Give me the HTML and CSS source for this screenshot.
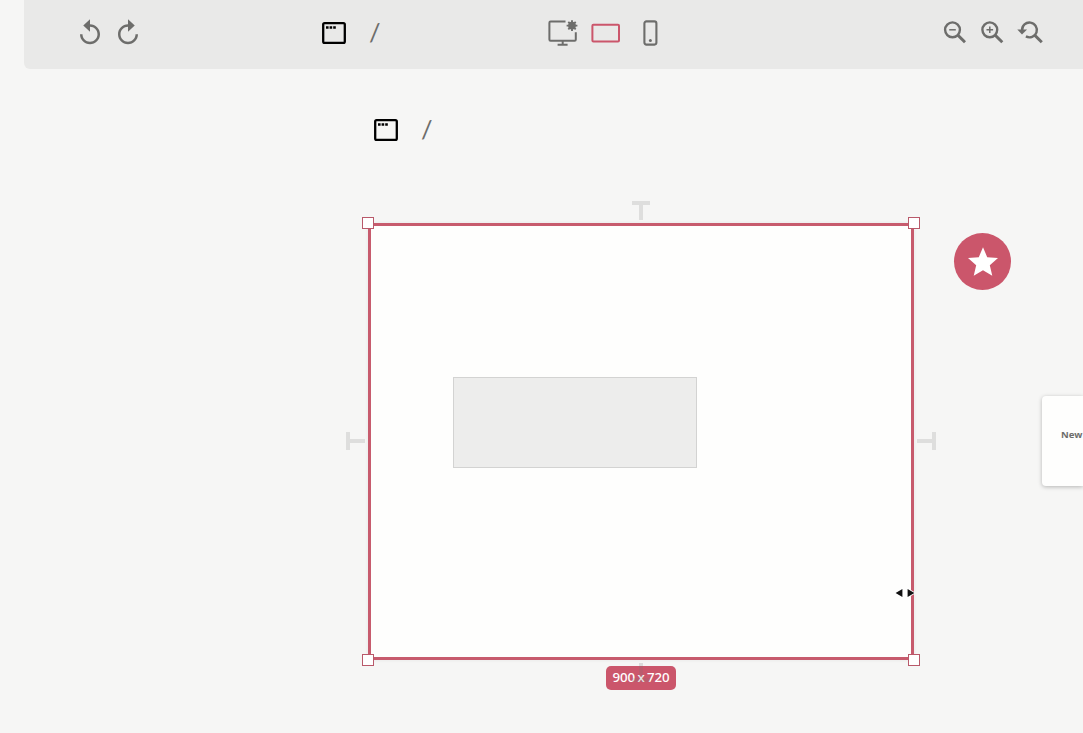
FILE: index.html
```html
<!DOCTYPE html>
<html lang="en">
<head>
<meta charset="utf-8">
<title>Page editor</title>
<link rel="stylesheet" href="styles.css">
</head>
<body>
<svg class="defs" width="0" height="0">
  <symbol id="window" viewBox="0 0 24 22"><rect x="1.2" y="1.2" width="21.6" height="19.6" rx="1.4" fill="none" stroke="currentColor" stroke-width="2.3"/><path d="M4 4.3h2.6v2.4H4zM7.6 4.3h2.6v2.4H7.6zM11.2 4.3h2.6v2.4h-2.6z" fill="currentColor"/></symbol>
  <symbol id="turn" viewBox="0 0 24 24"><path fill="currentColor" d="M12 5V1L6.6 6l5.4 5V7c3.31 0 6 2.69 6 6s-2.69 6-6 6-6-2.69-6-6H4c0 4.42 3.58 8 8 8s8-3.58 8-8-3.58-8-8-8z"/></symbol>
</svg>
<header class="toolbar">
  <div class="history">
    <svg class="turn"><use href="#turn"/></svg>
    <svg class="turn flip"><use href="#turn"/></svg>
  </div>
  <div class="crumb">
    <svg class="window"><use href="#window"/></svg><span class="slash">/</span>
  </div>
  <div class="devices">
    <svg width="30" height="28" viewBox="0 0 30 28" fill="none" stroke="currentColor" stroke-width="2">
      <path d="M17.5 2.6H2.6Q1.4 2.6 1.4 3.8V20.6Q1.4 21.8 2.6 21.8H26.6Q27.8 21.8 27.8 20.6V13.2M14.7 22v3.6M9.6 25.8h10"/>
      <g transform="translate(24 6.6)"><circle r="3.9" fill="currentColor" stroke="none"/><path stroke-width="1.9" d="M0-5.4V5.4M-5.4 0H5.4M-3.7-3.7L3.7 3.7M-3.7 3.7L3.7-3.7"/></g>
    </svg>
    <svg class="active" width="30" height="28" viewBox="0 0 30 28"><rect x="1.4" y="5.8" width="26.6" height="16.6" rx="1" fill="none" stroke="currentColor" stroke-width="2"/></svg>
    <svg width="16" height="28" viewBox="0 0 16 28"><rect x="2.4" y="2.4" width="12" height="23.2" rx="2" fill="none" stroke="currentColor" stroke-width="2.1"/><circle cx="8.4" cy="21.4" r="1.5" fill="currentColor"/></svg>
  </div>
  <div class="zooms">
    <svg width="26" height="26" viewBox="0 0 26 26" fill="none" stroke="currentColor"><g stroke-width="2.4"><circle cx="10.5" cy="10.8" r="7.4"/><path stroke-width="2.9" d="M15.6 15.9l7.4 7.4"/></g><path stroke-width="1.5" d="M7.2 10.8h6.6"/></svg>
    <svg width="26" height="26" viewBox="0 0 26 26" fill="none" stroke="currentColor"><g stroke-width="2.4"><circle cx="10.8" cy="10.8" r="7.4"/><path stroke-width="2.9" d="M15.9 15.9l7.4 7.4"/></g><path stroke-width="1.5" d="M7.5 10.8h6.6M10.8 7.5v6.6"/></svg>
    <svg width="27" height="26" viewBox="0 0 27 26" fill="none" stroke="currentColor"><path stroke-width="2.4" d="M6.1 11.3A7.4 7.4 0 1 1 9.9 17.4"/><path stroke-width="2.9" d="M18.4 15.9l7.4 7.4"/><path fill="currentColor" stroke="none" d="M1.3 10.4h9.8L6 15.4z"/></svg>
  </div>
</header>
<main class="canvas">
  <div class="crumb page-crumb">
    <svg class="window"><use href="#window"/></svg><span class="slash">/</span>
  </div>
  <div class="pin pin-top"></div>
  <div class="pin pin-left"></div>
  <div class="pin pin-right"></div>
  <section class="frame">
    <div class="block"></div>
    <i class="handle nw"></i><i class="handle ne"></i><i class="handle sw"></i><i class="handle se"></i>
  </section>
  <div class="size">900 x 720</div>
  <div class="pin pin-bottom"></div>
  <div class="star"><svg width="30" height="29" viewBox="2 2 20 19"><path fill="#fff" d="M12 17.27L18.18 21l-1.64-7.03L22 9.24l-7.19-.61L12 2 9.19 8.63 2 9.24l5.46 4.73L5.82 21z"/></svg></div>
  <div class="card">New</div>
  <svg class="cursor" width="22" height="14" viewBox="0 0 22 14"><path fill="#111" stroke="#fff" stroke-width="1.8" paint-order="stroke" d="M8.4 3v8L1.6 7zM13.6 3v8L20.4 7z"/></svg>
</main>
</body>
</html>
```
FILE: styles.css
```css
* { box-sizing: border-box; }
body { margin: 0; height: 733px; overflow: hidden; background: #f6f6f5; color: #6d6d6b; font-family: "Open Sans", "Noto Sans", sans-serif; }
svg { display: block; flex: none; }
.defs { position: absolute; }
.toolbar { display: grid; grid-template-columns: 247px 226px 395px 1fr; height: 69px; margin-left: 24px; padding-left: 51px; background: #e9e9e8; border-bottom-left-radius: 6px; }
.history, .devices, .zooms { display: flex; align-items: flex-start; }
.history { padding-top: 18px; gap: 7.5px; }
.turn { width: 30px; height: 30px; }
.flip { transform: scaleX(-1); }
.crumb { display: flex; align-items: flex-start; gap: 23px; padding-top: 22px; }
.window { width: 24px; height: 22px; color: #000; }
.slash { font-family: Lato, sans-serif; font-size: 25.5px; line-height: 21px; }
.devices { padding-top: 19px; gap: 13px; }
.devices svg:last-child { margin-left: 8px; }
.active { color: #cb566b; }
.zooms { padding-top: 19px; gap: 11px; margin-left: -1px; }
.canvas { position: relative; height: 664px; }
.page-crumb { padding: 50px 0 0 374px; }
.frame { position: absolute; left: 368px; top: 154px; width: 546px; height: 437px; border: 3px solid #c75b6d; background: #fefefd; box-shadow: 0 0 4px #0001; }
.block { position: absolute; left: 82px; top: 151px; width: 244px; height: 91px; background: #ededec; border: 1px solid #d3d3d2; }
.handle { position: absolute; width: 12px; height: 12px; background: #fff; border: 1px solid #b9596a; }
.nw, .sw { left: -9px; }
.ne, .se { right: -9px; }
.nw, .ne { top: -9px; }
.sw, .se { bottom: -9px; }
.pin { position: absolute; width: 18px; height: 20px; border-top: 4px solid #dededd; }
.pin::after { content: ""; position: absolute; left: 7px; top: 0; width: 4px; height: 15px; background: #dededd; }
.pin-top { left: 632px; top: 132px; }
.pin-left { left: 347px; top: 362px; transform: rotate(-90deg); }
.pin-right { left: 917px; top: 362px; transform: rotate(90deg); }
.pin-bottom { left: 632px; top: 593px; transform: rotate(180deg); border-color: #7773; }
.pin-bottom::after { background: #7773; }
.size { position: absolute; left: 606px; top: 597px; width: 70px; height: 24px; border-radius: 5px; background: #cb566b; color: #fff; font: 500 13.3px/22px "Noto Sans", sans-serif; word-spacing: -1px; letter-spacing: -.1px; text-align: center; white-space: nowrap; }
.star { position: absolute; left: 954px; top: 164px; width: 57px; height: 57px; border-radius: 50%; background: #cb566b; display: grid; place-items: center; }
.card { position: absolute; left: 1042px; right: 0; top: 327px; height: 90px; padding: 32px 0 32px 19px; border-radius: 4px 0 0 4px; background: #fefefd; box-shadow: 0 1px 4px #0004; font: 700 9.5px/14px "Noto Sans", sans-serif; }
.cursor { position: absolute; left: 894px; top: 517px; }
```
